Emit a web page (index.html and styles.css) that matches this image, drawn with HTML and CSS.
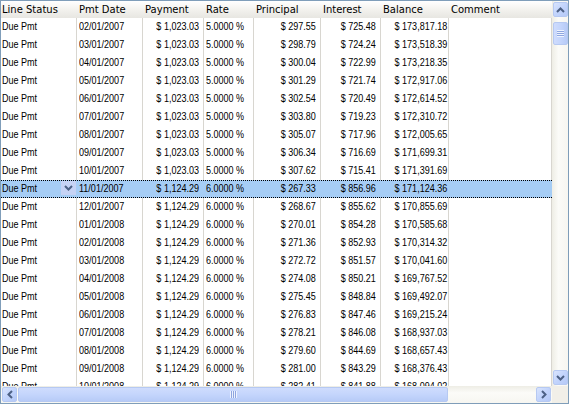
FILE: index.html
```html
<!DOCTYPE html>
<html>
<head>
<meta charset="utf-8">
<link rel="stylesheet" href="styles.css">
</head>
<body>
<div class="grid">
  <div class="viewport">
    <div class="row head">
      <div class="hc">Line Status</div><div class="hc">Pmt Date</div><div class="hc">Payment</div><div class="hc">Rate</div><div class="hc">Principal</div><div class="hc">Interest</div><div class="hc">Balance</div><div class="hc">Comment</div>
    </div>
    <div class="row"><div class="c"><span class="t">Due Pmt</span></div><div class="c"><span class="t">02/01/2007</span></div><div class="c r"><span class="t">$ 1,023.03</span></div><div class="c"><span class="t">5.0000 %</span></div><div class="c r"><span class="t">$ 297.55</span></div><div class="c r"><span class="t">$ 725.48</span></div><div class="c r"><span class="t">$ 173,817.18</span></div><div class="c"></div></div>
    <div class="row"><div class="c"><span class="t">Due Pmt</span></div><div class="c"><span class="t">03/01/2007</span></div><div class="c r"><span class="t">$ 1,023.03</span></div><div class="c"><span class="t">5.0000 %</span></div><div class="c r"><span class="t">$ 298.79</span></div><div class="c r"><span class="t">$ 724.24</span></div><div class="c r"><span class="t">$ 173,518.39</span></div><div class="c"></div></div>
    <div class="row"><div class="c"><span class="t">Due Pmt</span></div><div class="c"><span class="t">04/01/2007</span></div><div class="c r"><span class="t">$ 1,023.03</span></div><div class="c"><span class="t">5.0000 %</span></div><div class="c r"><span class="t">$ 300.04</span></div><div class="c r"><span class="t">$ 722.99</span></div><div class="c r"><span class="t">$ 173,218.35</span></div><div class="c"></div></div>
    <div class="row"><div class="c"><span class="t">Due Pmt</span></div><div class="c"><span class="t">05/01/2007</span></div><div class="c r"><span class="t">$ 1,023.03</span></div><div class="c"><span class="t">5.0000 %</span></div><div class="c r"><span class="t">$ 301.29</span></div><div class="c r"><span class="t">$ 721.74</span></div><div class="c r"><span class="t">$ 172,917.06</span></div><div class="c"></div></div>
    <div class="row"><div class="c"><span class="t">Due Pmt</span></div><div class="c"><span class="t">06/01/2007</span></div><div class="c r"><span class="t">$ 1,023.03</span></div><div class="c"><span class="t">5.0000 %</span></div><div class="c r"><span class="t">$ 302.54</span></div><div class="c r"><span class="t">$ 720.49</span></div><div class="c r"><span class="t">$ 172,614.52</span></div><div class="c"></div></div>
    <div class="row"><div class="c"><span class="t">Due Pmt</span></div><div class="c"><span class="t">07/01/2007</span></div><div class="c r"><span class="t">$ 1,023.03</span></div><div class="c"><span class="t">5.0000 %</span></div><div class="c r"><span class="t">$ 303.80</span></div><div class="c r"><span class="t">$ 719.23</span></div><div class="c r"><span class="t">$ 172,310.72</span></div><div class="c"></div></div>
    <div class="row"><div class="c"><span class="t">Due Pmt</span></div><div class="c"><span class="t">08/01/2007</span></div><div class="c r"><span class="t">$ 1,023.03</span></div><div class="c"><span class="t">5.0000 %</span></div><div class="c r"><span class="t">$ 305.07</span></div><div class="c r"><span class="t">$ 717.96</span></div><div class="c r"><span class="t">$ 172,005.65</span></div><div class="c"></div></div>
    <div class="row"><div class="c"><span class="t">Due Pmt</span></div><div class="c"><span class="t">09/01/2007</span></div><div class="c r"><span class="t">$ 1,023.03</span></div><div class="c"><span class="t">5.0000 %</span></div><div class="c r"><span class="t">$ 306.34</span></div><div class="c r"><span class="t">$ 716.69</span></div><div class="c r"><span class="t">$ 171,699.31</span></div><div class="c"></div></div>
    <div class="row"><div class="c"><span class="t">Due Pmt</span></div><div class="c"><span class="t">10/01/2007</span></div><div class="c r"><span class="t">$ 1,023.03</span></div><div class="c"><span class="t">5.0000 %</span></div><div class="c r"><span class="t">$ 307.62</span></div><div class="c r"><span class="t">$ 715.41</span></div><div class="c r"><span class="t">$ 171,391.69</span></div><div class="c"></div></div>
    <div class="row sel"><div class="c dd"><span class="t">Due Pmt</span><span class="ddbtn"><svg width="9" height="6" viewBox="0 0 9 6"><path d="M1 1 L4.5 4.5 L8 1" fill="none" stroke="#4d6185" stroke-width="2"/></svg></span></div><div class="c"><span class="t">11/01/2007</span></div><div class="c r"><span class="t">$ 1,124.29</span></div><div class="c"><span class="t">6.0000 %</span></div><div class="c r"><span class="t">$ 267.33</span></div><div class="c r"><span class="t">$ 856.96</span></div><div class="c r"><span class="t">$ 171,124.36</span></div><div class="c"></div></div>
    <div class="row"><div class="c"><span class="t">Due Pmt</span></div><div class="c"><span class="t">12/01/2007</span></div><div class="c r"><span class="t">$ 1,124.29</span></div><div class="c"><span class="t">6.0000 %</span></div><div class="c r"><span class="t">$ 268.67</span></div><div class="c r"><span class="t">$ 855.62</span></div><div class="c r"><span class="t">$ 170,855.69</span></div><div class="c"></div></div>
    <div class="row"><div class="c"><span class="t">Due Pmt</span></div><div class="c"><span class="t">01/01/2008</span></div><div class="c r"><span class="t">$ 1,124.29</span></div><div class="c"><span class="t">6.0000 %</span></div><div class="c r"><span class="t">$ 270.01</span></div><div class="c r"><span class="t">$ 854.28</span></div><div class="c r"><span class="t">$ 170,585.68</span></div><div class="c"></div></div>
    <div class="row"><div class="c"><span class="t">Due Pmt</span></div><div class="c"><span class="t">02/01/2008</span></div><div class="c r"><span class="t">$ 1,124.29</span></div><div class="c"><span class="t">6.0000 %</span></div><div class="c r"><span class="t">$ 271.36</span></div><div class="c r"><span class="t">$ 852.93</span></div><div class="c r"><span class="t">$ 170,314.32</span></div><div class="c"></div></div>
    <div class="row"><div class="c"><span class="t">Due Pmt</span></div><div class="c"><span class="t">03/01/2008</span></div><div class="c r"><span class="t">$ 1,124.29</span></div><div class="c"><span class="t">6.0000 %</span></div><div class="c r"><span class="t">$ 272.72</span></div><div class="c r"><span class="t">$ 851.57</span></div><div class="c r"><span class="t">$ 170,041.60</span></div><div class="c"></div></div>
    <div class="row"><div class="c"><span class="t">Due Pmt</span></div><div class="c"><span class="t">04/01/2008</span></div><div class="c r"><span class="t">$ 1,124.29</span></div><div class="c"><span class="t">6.0000 %</span></div><div class="c r"><span class="t">$ 274.08</span></div><div class="c r"><span class="t">$ 850.21</span></div><div class="c r"><span class="t">$ 169,767.52</span></div><div class="c"></div></div>
    <div class="row"><div class="c"><span class="t">Due Pmt</span></div><div class="c"><span class="t">05/01/2008</span></div><div class="c r"><span class="t">$ 1,124.29</span></div><div class="c"><span class="t">6.0000 %</span></div><div class="c r"><span class="t">$ 275.45</span></div><div class="c r"><span class="t">$ 848.84</span></div><div class="c r"><span class="t">$ 169,492.07</span></div><div class="c"></div></div>
    <div class="row"><div class="c"><span class="t">Due Pmt</span></div><div class="c"><span class="t">06/01/2008</span></div><div class="c r"><span class="t">$ 1,124.29</span></div><div class="c"><span class="t">6.0000 %</span></div><div class="c r"><span class="t">$ 276.83</span></div><div class="c r"><span class="t">$ 847.46</span></div><div class="c r"><span class="t">$ 169,215.24</span></div><div class="c"></div></div>
    <div class="row"><div class="c"><span class="t">Due Pmt</span></div><div class="c"><span class="t">07/01/2008</span></div><div class="c r"><span class="t">$ 1,124.29</span></div><div class="c"><span class="t">6.0000 %</span></div><div class="c r"><span class="t">$ 278.21</span></div><div class="c r"><span class="t">$ 846.08</span></div><div class="c r"><span class="t">$ 168,937.03</span></div><div class="c"></div></div>
    <div class="row"><div class="c"><span class="t">Due Pmt</span></div><div class="c"><span class="t">08/01/2008</span></div><div class="c r"><span class="t">$ 1,124.29</span></div><div class="c"><span class="t">6.0000 %</span></div><div class="c r"><span class="t">$ 279.60</span></div><div class="c r"><span class="t">$ 844.69</span></div><div class="c r"><span class="t">$ 168,657.43</span></div><div class="c"></div></div>
    <div class="row"><div class="c"><span class="t">Due Pmt</span></div><div class="c"><span class="t">09/01/2008</span></div><div class="c r"><span class="t">$ 1,124.29</span></div><div class="c"><span class="t">6.0000 %</span></div><div class="c r"><span class="t">$ 281.00</span></div><div class="c r"><span class="t">$ 843.29</span></div><div class="c r"><span class="t">$ 168,376.43</span></div><div class="c"></div></div>
    <div class="row"><div class="c"><span class="t">Due Pmt</span></div><div class="c"><span class="t">10/01/2008</span></div><div class="c r"><span class="t">$ 1,124.29</span></div><div class="c"><span class="t">6.0000 %</span></div><div class="c r"><span class="t">$ 282.41</span></div><div class="c r"><span class="t">$ 841.88</span></div><div class="c r"><span class="t">$ 168,094.02</span></div><div class="c"></div></div>
  </div>
  <div class="vscroll">
    <div class="sbtn"><svg width="9" height="6" viewBox="0 0 9 6"><path d="M1 5 L4.5 1.5 L8 5" fill="none" stroke="#4d6185" stroke-width="2"/></svg></div>
    <div class="vtrack">
      <div class="vthumb"><span class="grip-v"></span></div>
    </div>
    <div class="sbtn"><svg width="9" height="6" viewBox="0 0 9 6"><path d="M1 1 L4.5 4.5 L8 1" fill="none" stroke="#4d6185" stroke-width="2"/></svg></div>
  </div>
  <div class="hscroll">
    <div class="sbtn"><svg width="6" height="9" viewBox="0 0 6 9"><path d="M5 1 L1.5 4.5 L5 8" fill="none" stroke="#4d6185" stroke-width="2"/></svg></div>
    <div class="htrack">
      <div class="hthumb"><span class="grip-h"></span></div>
    </div>
    <div class="sbtn"><svg width="6" height="9" viewBox="0 0 6 9"><path d="M1 1 L4.5 4.5 L1 8" fill="none" stroke="#4d6185" stroke-width="2"/></svg></div>
  </div>
  <div class="corner"></div>
</div>
</body>
</html>
```
FILE: styles.css
```css
html, body {
  margin: 0;
  padding: 0;
  background: #ffffff;
}
.grid {
  width: 569px;
  height: 404px;
  box-sizing: border-box;
  border: 1px solid #7f9db9;
  display: grid;
  grid-template-columns: 551px 16px;
  grid-template-rows: 385px 17px;
  background: #ffffff;
}
.viewport {
  overflow: hidden;
}
.row {
  display: grid;
  grid-template-columns: 76px 66px 61px 50px 67px 60px 68px 103px;
  height: 18px;
  font-family: "Liberation Sans", Arial, sans-serif;
  font-size: 11px;
  line-height: 17px;
  color: #000;
}
.row.head {
  height: 17px;
  background: linear-gradient(#ffffff, #f3f2ee 50%, #e7e6e1);
  font-family: "DejaVu Sans", Verdana, sans-serif;
  font-size: 10px;
  line-height: 17px;
}
.hc {
  padding-left: 2px;
  white-space: nowrap;
  overflow: hidden;
}
.hc:first-child {
  padding-left: 1px;
}
.c {
  box-sizing: border-box;
  border-right: 1px solid #d8d6d0;
  padding-left: 2px;
  white-space: nowrap;
  overflow: hidden;
}
.c:first-child {
  padding-left: 1px;
}
.t {
  display: inline-block;
  transform: scaleX(0.82);
  transform-origin: left center;
}
.c.r {
  text-align: right;
  padding-right: 4px;
}
.c.r .t {
  transform-origin: right center;
}
.row.sel {
  background: #a6cdf5;
  box-sizing: border-box;
  border-top: 1px dotted #000;
  border-bottom: 1px dotted #000;
  line-height: 15px;
}
.row.sel .c {
  border-right-color: transparent;
}
.dd {
  display: flex;
  justify-content: space-between;
}
.ddbtn {
  width: 15px;
  height: 14px;
  background: #c6d3f5;
  display: flex;
  align-items: center;
  justify-content: center;
}
.vscroll {
  grid-column: 2;
  grid-row: 1;
  display: flex;
  flex-direction: column;
  background: linear-gradient(90deg, #eeede5, #fbfbf8 40%, #f7f6f1);
}
.hscroll {
  grid-column: 1;
  grid-row: 2;
  display: flex;
  background: linear-gradient(#eeede5, #fbfbf8 40%, #f7f6f1);
}
.corner {
  grid-column: 2;
  grid-row: 2;
  background: #f1efe8;
}
.sbtn {
  box-sizing: border-box;
  width: 15px;
  height: 15px;
  margin: 1px 0 1px 1px;
  border: 1px solid #b6c9f2;
  border-radius: 2px;
  background: linear-gradient(135deg, #d9e4fd, #c2d4fc 50%, #b5c9f7);
  display: flex;
  align-items: center;
  justify-content: center;
  flex: none;
}
.vtrack {
  flex: 1;
  padding-top: 4px;
}
.vthumb {
  box-sizing: border-box;
  width: 15px;
  height: 23px;
  margin-left: 1px;
  border: 1px solid #b6c9f2;
  border-radius: 2px;
  background: linear-gradient(90deg, #cfdcfd, #c4d5fc 50%, #b7cbf7);
  display: flex;
  align-items: center;
  justify-content: center;
}
.grip-v {
  width: 7px;
  height: 7px;
  background: repeating-linear-gradient(#eef3fe 0 1px, #8ea6e0 1px 2px);
}
.htrack {
  flex: 1;
  padding-left: 1px;
  display: flex;
}
.hthumb {
  box-sizing: border-box;
  width: 430px;
  height: 15px;
  margin-top: 1px;
  border: 1px solid #b6c9f2;
  border-radius: 2px;
  background: linear-gradient(#cfdcfd, #c4d5fc 50%, #b7cbf7);
  display: flex;
  align-items: center;
  justify-content: center;
}
.grip-h {
  width: 7px;
  height: 7px;
  background: repeating-linear-gradient(90deg, #eef3fe 0 1px, #8ea6e0 1px 2px);
}
.hscroll .sbtn:last-child {
  margin-right: 1px;
}
```
